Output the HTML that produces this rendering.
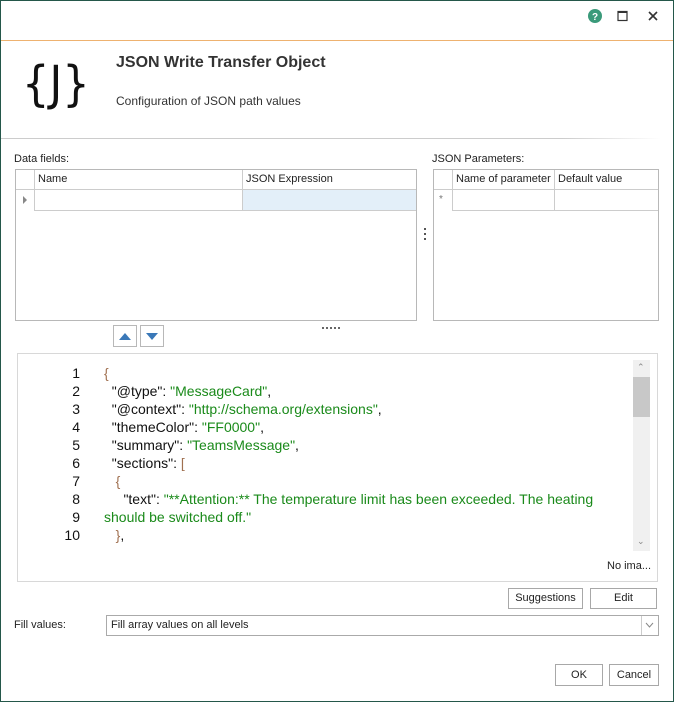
<!DOCTYPE html>
<html><head><style>
*{margin:0;padding:0;box-sizing:border-box}
body{width:674px;height:702px;background:#fff;font-family:"Liberation Sans",sans-serif;font-size:11px;color:#222;position:relative;overflow:hidden}
.a{position:absolute}
.win{left:0;top:0;width:674px;height:702px;border:1px solid #24574a}
.b{border:1px solid #b8b8b8}
.btn{border:1px solid #a8a8a8;background:#fff;text-align:center;line-height:19px;font-size:11px}
.code{font-size:14px;line-height:18px}
.s{color:#1a8a1a}.p{color:#a07050}
</style></head><body>
<div class="a win"></div>
<div class="a" style="left:1px;top:40px;width:672px;height:1px;background:#eeb270"></div>
<svg class="a" style="left:587px;top:8px" width="80" height="16">
<circle cx="8" cy="8" r="7" fill="#3a9a7a"/><text x="8" y="12" font-size="10" font-weight="bold" fill="#fff" text-anchor="middle" font-family="Liberation Sans">?</text>
<rect x="31" y="3.5" width="9" height="9" fill="none" stroke="#333" stroke-width="1.2"/><rect x="31" y="3" width="9" height="2" fill="#333"/>
<path d="M62 4 L70 12 M70 4 L62 12" stroke="#333" stroke-width="1.6"/>
</svg>
<div class="a" style="left:22px;top:54px;font-size:48px;line-height:60px;font-family:'DejaVu Sans',sans-serif;color:#111;transform:scaleX(0.9);transform-origin:left">{J}</div>
<div class="a" style="left:116px;top:54px;font-size:16px;font-weight:bold;color:#333">JSON Write Transfer Object</div>
<div class="a" style="left:116px;top:94px;font-size:12px;color:#333">Configuration of JSON path values</div>
<div class="a" style="left:1px;top:138px;width:660px;height:1px;background:linear-gradient(90deg,#ccc,#ccc 85%,#fff)"></div>

<div class="a" style="left:14px;top:153px">Data fields:</div>
<div class="a b" style="left:15px;top:169px;width:402px;height:152px"></div>
<div class="a" style="left:16px;top:189px;width:400px;height:1px;background:#ccc"></div>
<div class="a" style="left:34px;top:170px;width:1px;height:40px;background:#ccc"></div>
<div class="a" style="left:242px;top:170px;width:1px;height:40px;background:#ccc"></div>
<div class="a" style="left:243px;top:190px;width:173px;height:20px;background:#e3eff9"></div>
<div class="a" style="left:34px;top:210px;width:382px;height:1px;background:#ccc"></div>
<div class="a" style="left:38px;top:173px">Name</div>
<div class="a" style="left:246px;top:173px">JSON Expression</div>
<svg class="a" style="left:22px;top:196px" width="6" height="8"><path d="M1 0L5 4L1 8Z" fill="#888"/></svg>

<div class="a" style="left:432px;top:153px">JSON Parameters:</div>
<div class="a b" style="left:433px;top:169px;width:226px;height:152px"></div>
<div class="a" style="left:434px;top:189px;width:224px;height:1px;background:#ccc"></div>
<div class="a" style="left:452px;top:170px;width:1px;height:40px;background:#ccc"></div>
<div class="a" style="left:554px;top:170px;width:1px;height:40px;background:#ccc"></div>
<div class="a" style="left:452px;top:210px;width:206px;height:1px;background:#ccc"></div>
<div class="a" style="left:456px;top:173px">Name of parameter</div>
<div class="a" style="left:558px;top:173px">Default value</div>
<div class="a" style="left:439px;top:194px;color:#777;font-size:10px">*</div>

<svg class="a" style="left:424px;top:228px" width="4" height="16"><g fill="#555"><rect x="0" y="0" width="2" height="2"/><rect x="0" y="5" width="2" height="2"/><rect x="0" y="10" width="2" height="2"/></g></svg>
<svg class="a" style="left:322px;top:327px" width="20" height="3"><g fill="#666"><rect x="0" y="0" width="2" height="2"/><rect x="4" y="0" width="2" height="2"/><rect x="8" y="0" width="2" height="2"/><rect x="12" y="0" width="2" height="2"/><rect x="16" y="0" width="2" height="2"/></g></svg>
<div class="a b" style="left:113px;top:325px;width:24px;height:22px"></div>
<div class="a b" style="left:140px;top:325px;width:24px;height:22px"></div>
<svg class="a" style="left:113px;top:325px" width="52" height="22"><path d="M6 15L12 8L18 15Z" fill="#3a78b8"/><path d="M33 8L45 8L39 15Z" fill="#3a78b8"/></svg>

<div class="a" style="left:17px;top:353px;width:641px;height:229px;border:1px solid #d8d8d8"></div>
<div class="a code" style="left:40px;top:364px;width:40px;text-align:right;color:#111">1<br>2<br>3<br>4<br>5<br>6<br>7<br>8<br>9<br>10</div>
<div class="a code" style="left:104px;top:364px;color:#111;white-space:pre"><span class="p">{</span>
  "@type": <span class="s">"MessageCard"</span>,
  "@context": <span class="s">"http://schema.org/extensions"</span>,
  "themeColor": <span class="s">"FF0000"</span>,
  "summary": <span class="s">"TeamsMessage"</span>,
  "sections": <span class="p">[</span>
   <span class="p">{</span>
     "text": <span class="s">"**Attention:** The temperature limit has been exceeded. The heating</span>
<span class="s">should be switched off."</span>
   <span class="p">}</span>,</div>
<div class="a" style="left:20px;top:545px;width:612px;height:8px;background:#fff"></div>
<div class="a" style="left:633px;top:360px;width:17px;height:191px;background:#f0f0f0"></div>
<div class="a" style="left:633px;top:377px;width:17px;height:40px;background:#c8c8c8"></div>
<div class="a" style="left:637px;top:362px;color:#888;font-size:9px">&#8963;</div>
<div class="a" style="left:637px;top:536px;color:#888;font-size:9px">&#8964;</div>
<div class="a" style="left:607px;top:560px">No ima...</div>

<div class="a btn" style="left:508px;top:588px;width:75px;height:21px">Suggestions</div>
<div class="a btn" style="left:590px;top:588px;width:67px;height:21px">Edit</div>
<div class="a" style="left:14px;top:619px">Fill values:</div>
<div class="a b" style="left:106px;top:615px;width:553px;height:21px;border-color:#aaa"></div>
<div class="a" style="left:111px;top:619px">Fill array values on all levels</div>
<div class="a" style="left:641px;top:616px;width:1px;height:19px;background:#ccc"></div>
<svg class="a" style="left:645px;top:622px" width="9" height="6"><path d="M1 1L4.5 5L8 1" fill="none" stroke="#888"/></svg>
<div class="a btn" style="left:555px;top:664px;width:48px;height:22px;line-height:20px">OK</div>
<div class="a btn" style="left:609px;top:664px;width:50px;height:22px;line-height:20px">Cancel</div>
</body></html>
